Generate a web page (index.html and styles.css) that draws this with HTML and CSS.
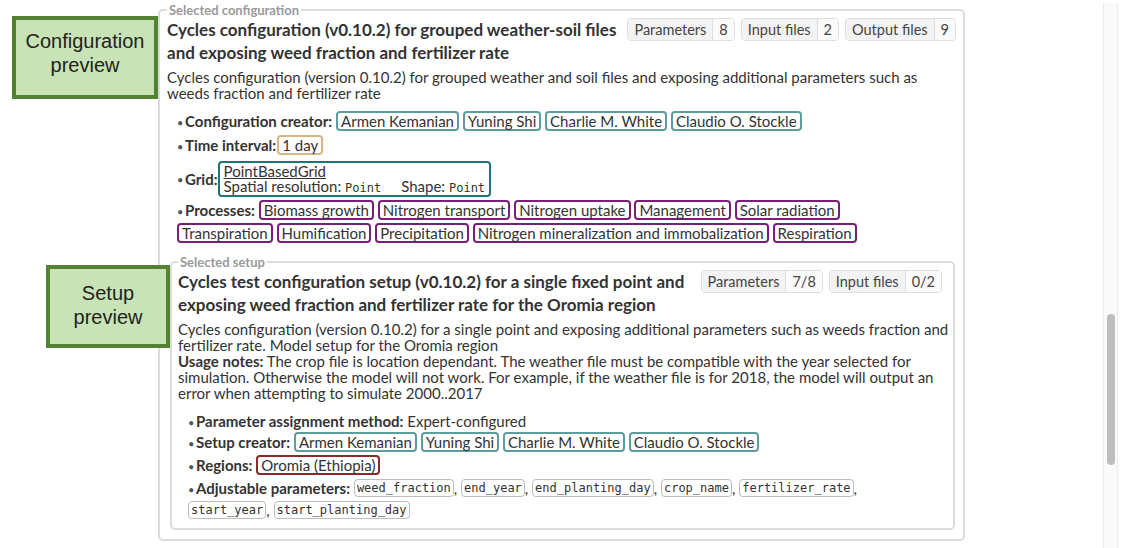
FILE: index.html
```html
<!DOCTYPE html>
<html>
<head>
<meta charset="utf-8">
<link rel="stylesheet" href="styles.css">
</head>
<body>
<div class="page">
  <fieldset class="panel config">
    <legend>Selected configuration</legend>
    <div class="head">
      <h2 class="title">Cycles configuration (v0.10.2) for grouped weather-soil files and exposing weed fraction and fertilizer rate</h2>
      <div class="counts">
        <span class="count"><span class="count-label">Parameters</span><span class="count-num">8</span></span>
        <span class="count"><span class="count-label">Input files</span><span class="count-num">2</span></span>
        <span class="count"><span class="count-label">Output files</span><span class="count-num">9</span></span>
      </div>
    </div>
    <p class="desc">Cycles configuration (version 0.10.2) for grouped weather and soil files and exposing additional parameters such as weeds fraction and fertilizer rate</p>
    <ul class="props">
      <li><b>Configuration creator:</b> <span class="tag person">Armen Kemanian</span> <span class="tag person">Yuning Shi</span> <span class="tag person">Charlie M. White</span> <span class="tag person">Claudio O. Stockle</span></li>
      <li><b>Time interval:</b><span class="tag time">1 day</span></li>
      <li class="grid-item"><b>Grid:</b><span class="grid-box"><a class="grid-link">PointBasedGrid</a><span class="grid-meta"><span>Spatial resolution: <code>Point</code></span><span>Shape: <code>Point</code></span></span></span></li>
      <li><b>Processes:</b> <span class="tag process">Biomass growth</span> <span class="tag process">Nitrogen transport</span> <span class="tag process">Nitrogen uptake</span> <span class="tag process">Management</span> <span class="tag process">Solar radiation</span> <span class="tag process">Transpiration</span> <span class="tag process">Humification</span> <span class="tag process">Precipitation</span> <span class="tag process">Nitrogen mineralization and immobalization</span> <span class="tag process">Respiration</span></li>
    </ul>

    <fieldset class="panel setup">
      <legend>Selected setup</legend>
      <div class="head">
        <h2 class="title">Cycles test configuration setup (v0.10.2) for a single fixed point and exposing weed fraction and fertilizer rate for the Oromia region</h2>
        <div class="counts">
          <span class="count"><span class="count-label">Parameters</span><span class="count-num">7/8</span></span>
          <span class="count"><span class="count-label">Input files</span><span class="count-num">0/2</span></span>
        </div>
      </div>
      <p class="desc">Cycles configuration (version 0.10.2) for a single point and exposing additional parameters such as weeds fraction and fertilizer rate. Model setup for the Oromia region<br><b>Usage notes:</b> The crop file is location dependant. The weather file must be compatible with the year selected for simulation. Otherwise the model will not work. For example, if the weather file is for 2018, the model will output an error when attempting to simulate 2000..2017</p>
      <ul class="props">
        <li class="plain"><b>Parameter assignment method:</b> Expert-configured</li>
        <li><b>Setup creator:</b> <span class="tag person">Armen Kemanian</span> <span class="tag person">Yuning Shi</span> <span class="tag person">Charlie M. White</span> <span class="tag person">Claudio O. Stockle</span></li>
        <li><b>Regions:</b> <span class="tag region">Oromia (Ethiopia)</span></li>
        <li><b>Adjustable parameters:</b> <code class="param">weed_fraction</code>, <code class="param">end_year</code>, <code class="param">end_planting_day</code>, <code class="param">crop_name</code>, <code class="param">fertilizer_rate</code>, <code class="param">start_year</code>, <code class="param">start_planting_day</code></li>
      </ul>
    </fieldset>
  </fieldset>

  <div class="callout callout-config">Configuration<br>preview</div>
  <div class="callout callout-setup">Setup<br>preview</div>
  <div class="scrollbar"><div class="thumb"></div></div>
</div>
</body>
</html>
```

FILE: styles.css
```css
* { box-sizing: border-box; }
html, body { margin: 0; padding: 0; background: #fff; }
body {
  font-family: Lato, "Open Sans", sans-serif;
  font-size: 15px;
  color: #333;
  width: 1138px;
  height: 548px;
  overflow: hidden;
}
.page {
  position: relative;
  width: 1138px;
  height: 548px;
}

.panel {
  border: 2px solid #dcdcdc;
  border-radius: 5px;
  margin: 0;
  min-width: 0;
}
.panel > legend {
  font-size: 13px;
  line-height: 14px;
  font-weight: 700;
  color: #9a9a9a;
  padding: 0 2px;
}
.config {
  margin: 3px 0 0 158px;
  width: 807px;
  height: 538px;
  padding: 0 7px 9px 7px;
}
.setup {
  margin: 10.5px 1px 0 3px;
  padding: 0 6px 6.5px 6px;
}
.setup .head { margin-top: 1px; }
.setup .counts { margin-right: 5px; }
.setup .desc { margin-right: -4px; }

.head {
  display: flex;
  align-items: flex-start;
  gap: 6px;
  margin-top: 1px;
}
.title {
  flex: 1;
  margin: 0;
  font-size: 17px;
  line-height: 23px;
  font-weight: 700;
  color: #333;
}
.counts {
  display: flex;
  gap: 6px;
  flex: none;
}
.count {
  display: flex;
  border: 1px solid #dedede;
  border-radius: 4px;
  height: 23px;
  line-height: 21px;
  font-size: 14.5px;
  color: #444;
  overflow: hidden;
}
.count-label {
  background: #f3f3f3;
  padding: 0 6px;
  border-right: 1px solid #dedede;
}
.count-num {
  background: #fafafa;
  padding: 0 6px;
}

.desc {
  margin: 5px 0 0 0;
  line-height: 16px;
}
.desc b { font-weight: 700; }

.props {
  list-style: none;
  margin: 8.5px 0 0 0;
  padding: 0 24px 0 10px;
}
.props li {
  line-height: 23px;
  margin-bottom: 1px;
}
.setup .props li {
  line-height: 22px;
  margin-bottom: 1px;
}
.setup .props li.plain {
  line-height: 20px;
  padding-top: 1px;
  margin-bottom: 0;
}
.props li::before {
  content: "\2022";
  display: inline-block;
  width: 8px;
  font-size: 11px;
  line-height: 1;
  color: #555;
}
.props b { font-weight: 700; }

.tag {
  display: inline-block;
  border: 2px solid #5e9d9d;
  border-radius: 4px;
  padding: 0 3px;
  line-height: 16px;
  vertical-align: top;
  margin-top: 1.5px;
}
.setup .tag { margin-top: 1px; }
.tag.person { border-color: #5e9d9d; }
.tag.time { border-color: #d8b584; margin-left: 1px; }
.tag.process { border-color: #7a1e7a; }
.tag.region { border-color: #8c2a2a; }

.props li.grid-item {
  display: flex;
  align-items: center;
  padding: 3.5px 0 0.5px 0;
  line-height: 23px;
}
.grid-item::before { flex: none; }
.grid-box {
  display: flex;
  flex-direction: column;
  border: 2px solid #1d7676;
  border-radius: 4px;
  padding: 1px 4px;
  height: 36px;
  line-height: 15px;
}
.grid-link {
  display: block;
  height: 15px;
  color: #333;
  text-decoration: underline;
}
.grid-meta {
  display: flex;
  gap: 20px;
  height: 15px;
}
.grid-meta code { line-height: 1; }
code {
  font-family: "DejaVu Sans Mono", monospace;
  font-size: 12px;
}
.param {
  display: inline-block;
  border: 1px solid #bdbdbd;
  border-radius: 4px;
  padding: 0 2px;
  line-height: 16px;
  vertical-align: top;
  margin-top: 2px;
}

.callout {
  position: absolute;
  z-index: 2;
  background: #c8e3b5;
  border: 4px solid #548235;
  font-family: "Liberation Sans", Arial, sans-serif;
  font-size: 20px;
  line-height: 24px;
  color: #222;
  text-align: center;
}
.callout-config {
  left: 12px;
  top: 13px;
  width: 146px;
  height: 83px;
  padding-top: 9px;
}
.callout-setup {
  left: 46px;
  top: 262px;
  width: 124px;
  height: 83px;
  padding-top: 12px;
}

.scrollbar {
  position: absolute;
  left: 1103px;
  top: 0;
  width: 15px;
  height: 548px;
  background: #fafafa;
  border-left: 1px solid #ececec;
  border-right: 1px solid #ececec;
}
.thumb {
  position: absolute;
  left: 3px;
  top: 311px;
  width: 8px;
  height: 151px;
  background: #bdbdbd;
  border-radius: 4px;
}
```
